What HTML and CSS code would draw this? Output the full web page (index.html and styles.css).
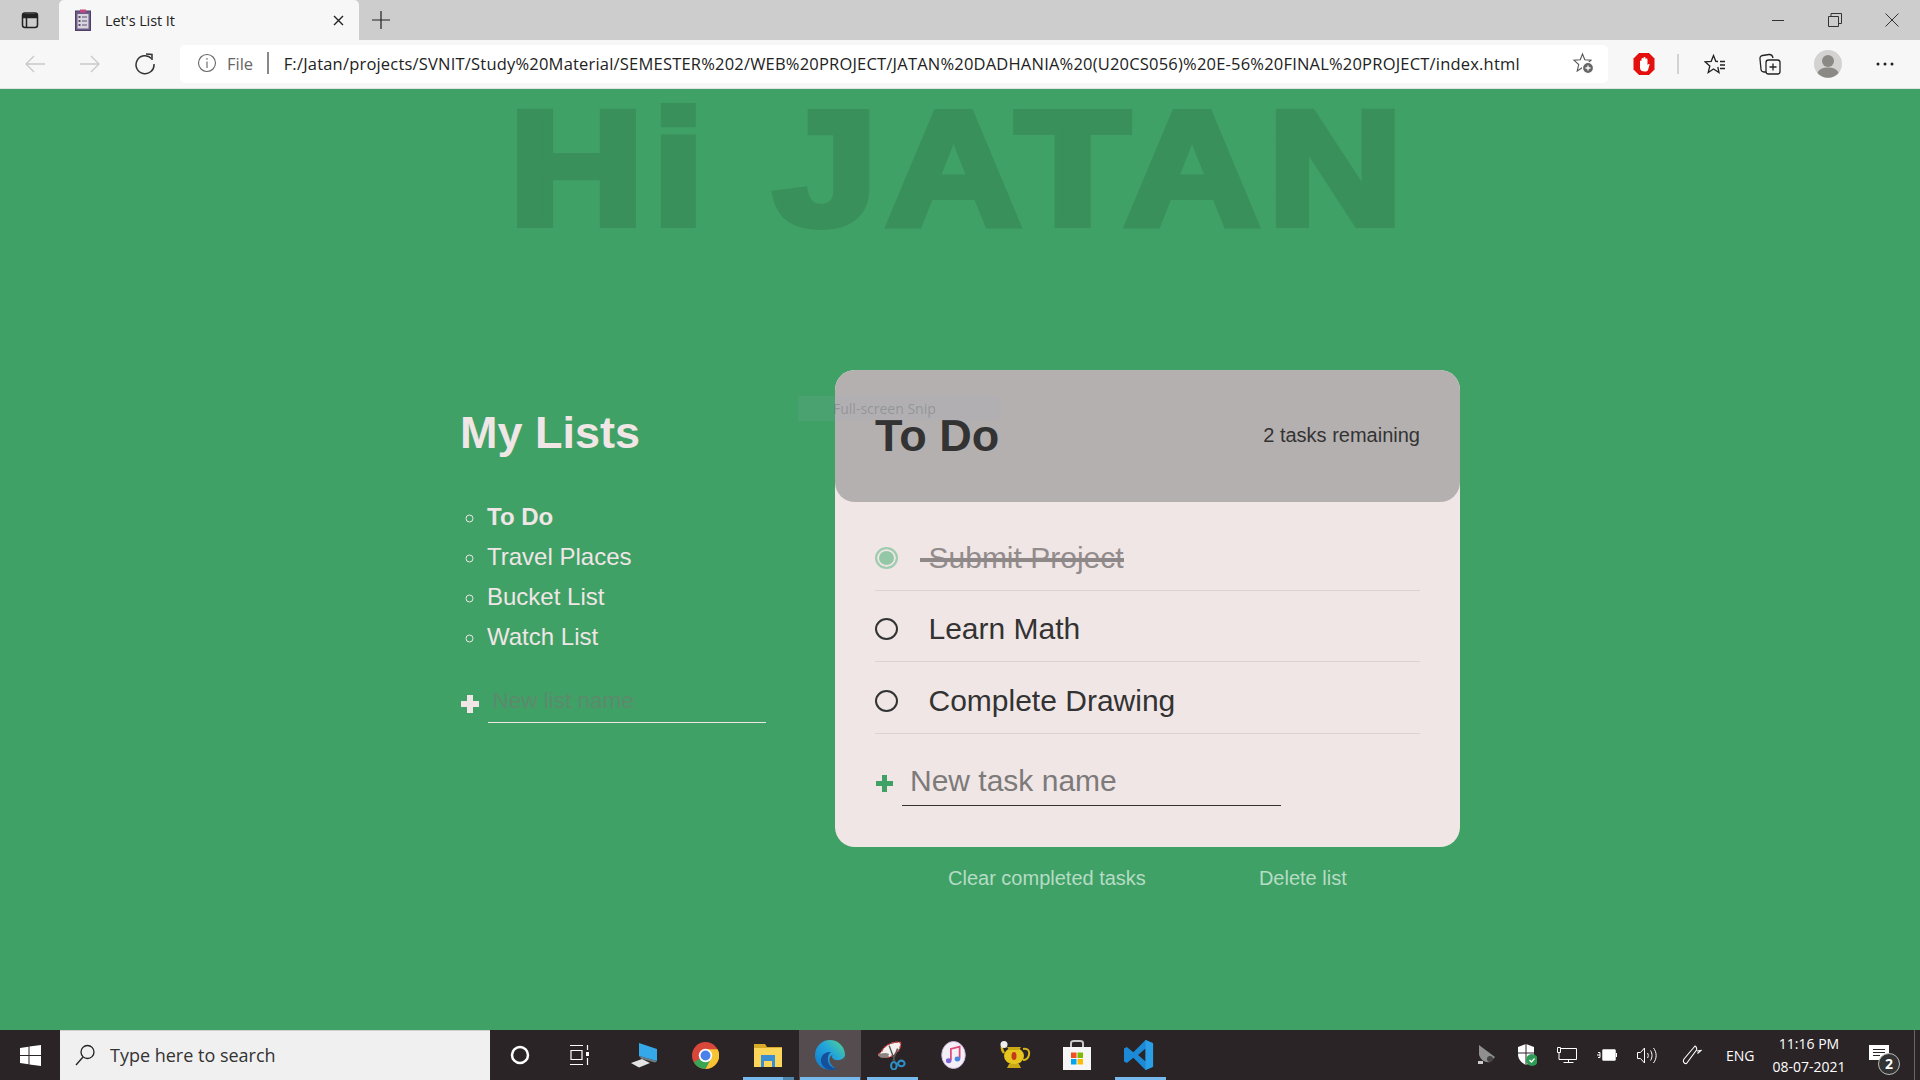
FILE: index.html
```html
<!DOCTYPE html>
<html lang="en">
<head>
<meta charset="utf-8">
<title>Let's List It</title>
<link rel="stylesheet" href="styles.css">
</head>
<body>
<header class="browser">
  <div class="tabbar">
    <div class="side-btn">
      <svg width="18" height="18" viewBox="0 0 18 18" fill="none" stroke="#222" stroke-width="1.5"><rect x="1.5" y="2" width="15" height="14.5" rx="2.5"/><path d="M2 3.5h14v3H2z" fill="#222"/><path d="M5.5 6v10"/></svg>
    </div>
    <div class="tab">
      <svg class="tab-icon" width="16" height="22" viewBox="0 0 16 22"><rect x="0.5" y="2" width="15" height="19.5" fill="#6d5a86" stroke="#4e3f66"/><rect x="5" y="0.5" width="6" height="3" fill="#c2477f"/><rect x="2.5" y="5" width="11" height="14.5" fill="#d9d5de"/><path d="M3.5 7h2v2h-2zM3.5 11h2v2h-2zM3.5 15h2v2h-2z" fill="#5d5070"/><path d="M7 8h5M7 12h5M7 16h5" stroke="#5d5070"/></svg>
      <span class="tab-title">Let's List It</span>
      <svg class="tab-close" width="11" height="11" viewBox="0 0 11 11" stroke="#222" stroke-width="1.4"><path d="M1 1l9 9M10 1l-9 9"/></svg>
    </div>
    <div class="new-tab">
      <svg width="18" height="18" viewBox="0 0 18 18" stroke="#222" stroke-width="1.2"><path d="M9 0v18M0 9h18"/></svg>
    </div>
    <div class="win-btns">
      <div class="win-btn"><svg width="14" height="14" viewBox="0 0 14 14" stroke="#333"><path d="M1 7.5h12"/></svg></div>
      <div class="win-btn"><svg width="14" height="14" viewBox="0 0 14 14" fill="none" stroke="#333"><path d="M.5 3.5h10v10H.5z"/><path d="M3 3.5V.5h10.500v10h-3"/></svg></div>
      <div class="win-btn"><svg width="14" height="14" viewBox="0 0 14 14" stroke="#333"><path d="M.5.5l13 13M13.500.5l-13 13"/></svg></div>
    </div>
  </div>
  <div class="toolbar">
    <div class="nav">
      <svg width="22" height="22" viewBox="0 0 22 22" fill="none" stroke="#c9c9c9" stroke-width="1.3"><path d="M21 11H2M10 3l-8 8 8 8"/></svg>
      <svg width="22" height="22" viewBox="0 0 22 22" fill="none" stroke="#c9c9c9" stroke-width="1.3"><path d="M1 11h19M12 3l8 8-8 8"/></svg>
      <svg width="22" height="22" viewBox="0 0 22 22" fill="none" stroke="#333" stroke-width="1.5"><path d="M17.500 5.500A9 9 0 1 0 20 11"/><path d="M12 1l6 .5V7"/></svg>
    </div>
    <div class="address">
      <svg width="20" height="20" viewBox="0 0 20 20" fill="none" stroke="#666" stroke-width="1.1"><circle cx="10" cy="10" r="8.500"/><path d="M10 8.500V15M10 5v1.800"/></svg>
      <span class="file-label">File</span>
      <span class="addr-sep"></span>
      <span class="url">F:/Jatan/projects/SVNIT/Study%20Material/SEMESTER%202/WEB%20PROJECT/JATAN%20DADHANIA%20(U20CS056)%20E-56%20FINAL%20PROJECT/index.html</span>
      <svg class="addr-star" width="22" height="22" viewBox="0 0 22 22" fill="none" stroke="#555" stroke-width="1.1"><path d="M10.500 2l2.300 5.800 6.200.5-4.700 4.200 1.500 6.500-5.300-3.500-5.300 3.500 1.500-6.500L2 8.300l6.200-.5z"/><circle cx="16" cy="16" r="5.500" fill="#666" stroke="#fff" stroke-width="1.200"/><path d="M16 13.500v5M13.500 16h5" stroke="#fff" stroke-width="1.300"/></svg>
    </div>
    <div class="tools">
      <svg class="t-adblock" width="22" height="24" viewBox="0 0 22 24"><path d="M6 1h10l5.500 5.500v11L16 23H6L.5 17.500v-11z" fill="#e3100f"/><path d="M7 16V9.500c0-1.500 1.500-1.500 1.500 0V7c0-1.500 2-1.500 2 0V6c0-1.500 2-1.500 2 0v1.500c0-1.300 2-1.300 2 0V13c1-1.500 2.500-1 2-.2L15 18c-.6 1-1.500 1.500-3 1.500-3 0-5-1-5-3.500z" fill="#fff"/></svg>
      <span class="tool-sep"></span>
      <svg class="t-fav" width="22" height="22" viewBox="0 0 22 22" fill="none" stroke="#222" stroke-width="1.300"><path d="M14 8.500l-2.200-.2L9.500 2.500 7.200 8.300 1 8.800 5.800 13l-1.600 6.500 5.300-3.500 5.500 3.500-1.200-5.500"/><path d="M16 8.500h5M16 12h5M16 15.500h5"/></svg>
      <svg class="t-coll" width="22" height="22" viewBox="0 0 22 22" fill="none" stroke="#222" stroke-width="1.300"><rect x="7" y="7" width="14" height="14" rx="2.500"/><path d="M14 10.500v7M10.500 14h7"/><path d="M7 19H5a3 3 0 0 1-3-2.500L1 6a3 3 0 0 1 2.500-3.500L10 1.500c2-.2 3.500 1 4 3.500"/></svg>
      <svg class="t-avatar" width="28" height="28" viewBox="0 0 28 28"><circle cx="14" cy="14" r="14" fill="#d4d2d0"/><circle cx="14" cy="11" r="6" fill="#8b8985"/><path d="M3.500 23c1.500-4 5.500-5.500 10.500-5.500s9 1.500 10.500 5.500A14 14 0 0 1 3.500 23z" fill="#8b8985"/></svg>
      <svg class="t-more" width="18" height="4" viewBox="0 0 18 4" fill="#222"><circle cx="2" cy="2" r="1.500"/><circle cx="9" cy="2" r="1.500"/><circle cx="16" cy="2" r="1.500"/></svg>
    </div>
  </div>
</header>

<main class="page">
  <h1 class="hero"><span class="hero-text">Hi JATAN</span></h1>
  <div class="board">
    <section class="lists">
      <h2 class="lists-title">My Lists</h2>
      <ul class="list-names">
        <li class="active">To Do</li>
        <li>Travel Places</li>
        <li>Bucket List</li>
        <li>Watch List</li>
      </ul>
      <form class="new-list">
        <span class="plus plus-light"></span>
        <input class="new-list-input" type="text" placeholder="New list name">
      </form>
    </section>
    <section class="todo">
      <div class="card">
        <div class="card-head">
          <h2 class="card-title">To Do</h2>
          <p class="remaining">2 tasks remaining</p>
        </div>
        <div class="card-body">
          <div class="task done"><span class="radio"></span><span class="task-text">Submit Project</span></div>
          <div class="task"><span class="radio"></span><span class="task-text">Learn Math</span></div>
          <div class="task"><span class="radio"></span><span class="task-text">Complete Drawing</span></div>
          <form class="new-task">
            <span class="plus plus-green"></span>
            <input class="new-task-input" type="text" placeholder="New task name">
          </form>
        </div>
      </div>
      <div class="actions">
        <span class="action">Clear completed tasks</span>
        <span class="action">Delete list</span>
      </div>
    </section>
  </div>
  <div class="snip-toast"><span class="snip-thumb"></span><span class="snip-text">Full-screen Snip</span></div>
</main>

<footer class="taskbar">
  <div class="start">
    <svg width="21" height="21" viewBox="0 0 21 21" fill="#fff"><path d="M0 3l8.500-1.200V10H0zM9.500 1.600L21 0v10H9.500zM0 11h8.500v8.200L0 18zM9.500 11H21v10L9.500 19.400z"/></svg>
  </div>
  <div class="search">
    <svg width="20" height="22" viewBox="0 0 20 22" fill="none" stroke="#222" stroke-width="1.300"><circle cx="12.500" cy="8" r="6.500"/><path d="M8 13L1 21"/></svg>
    <span class="search-text">Type here to search</span>
  </div>
  <div class="tb-item"><svg width="20" height="20" viewBox="0 0 20 20" fill="none" stroke="#fff" stroke-width="2.500"><circle cx="10" cy="10" r="8"/></svg></div>
  <div class="tb-item"><svg width="20" height="20" viewBox="0 0 20 20" fill="none" stroke="#fff" stroke-width="1.200"><path d="M0 .5h13M0 19.500h13M1 5.500h11v9H1z"/><path d="M17.500 0v5M17.500 13v7"/><rect x="16" y="7" width="3" height="4" fill="#fff" stroke="none"/></svg></div>
  <div class="apps">
    <div class="app"><svg width="28" height="26" viewBox="0 0 28 26"><path d="M9 1l18 6v12L9 14z" fill="#35a8ea"/><path d="M9 14l18 5-2 1.500-14-4z" fill="#6f7f88"/><path d="M1 21l11-4 8 4-11 4.500z" fill="#e4e4e4"/></svg></div>
    <div class="app"><svg width="27" height="27" viewBox="0 0 30 30"><circle cx="15" cy="15" r="15" fill="#d9473a"/><path d="M15 15L2 22.500A15 15 0 0 0 15 30l7.500-13z" fill="#3aa655"/><path d="M15 8h13.500a15 15 0 0 1-13.500 22l7-13z" fill="#f6c433"/><circle cx="15" cy="15" r="7.500" fill="#fff"/><circle cx="15" cy="15" r="5.500" fill="#4a80ea"/></svg></div>
    <div class="app"><svg width="28" height="23" viewBox="0 0 28 23"><path d="M0 0h11l2 3h15v20H0z" fill="#d9a928"/><path d="M0 4h28v19H0z" fill="#fbd65a"/><path d="M7 11h14v12h-3v-6h-8v6H7z" fill="#3a8fd4"/></svg></div>
    <div class="app app-active"><svg width="30" height="30" viewBox="0 0 30 30"><defs><linearGradient id="edgeFill" x1="0" y1="1" x2="1" y2="0"><stop offset="0" stop-color="#1278c8"/><stop offset=".55" stop-color="#22a3dc"/><stop offset="1" stop-color="#55d68a"/></linearGradient></defs><circle cx="15" cy="15" r="15" fill="url(#edgeFill)"/><path d="M30 16c-2 4-7 5-11 3.500-2-1-2.500-3-1.500-4.500-3 1-4 5-2 8.500 2 3 5 6 8 5.500 3-1.500 6-7 6.500-12.500z" fill="#544c4e"/><path d="M16 12C9 11 5 17 6 22c1 4 5 8 9 8 3 0 6-.6 8-1.800-4 .8-8-2-9.500-5.500C12 19 13 14 16 12z" fill="#14509c"/></svg></div>
    <div class="app"><svg width="28" height="29" viewBox="0 0 30 31" fill="none"><path d="M4 11C7 4 17 0 24 1.500c1.500 5-3 12-10 15-5 2-11 .5-14-1.500z" fill="#f4f0f0" stroke="#d03a3a" stroke-width="1.500" stroke-dasharray="3 1.500"/><path d="M0 15c3-2 8-3 12-1l-2 4H3z" fill="#8a8580"/><path d="M12 5l6 16M21 8l-5 13" stroke="#555" stroke-width="1.500"/><ellipse cx="17" cy="26.500" rx="3" ry="4" stroke="#2e8fc4" stroke-width="2.200"/><ellipse cx="25" cy="24" rx="3.500" ry="3" stroke="#2e8fc4" stroke-width="2.200"/></svg></div>
    <div class="app"><svg width="27" height="28" viewBox="0 0 28 32"><ellipse cx="14" cy="16" rx="13.500" ry="15.500" fill="#f4eef6" stroke="#c8b4d8"/><path d="M11 22V9l10-2.500V20" fill="none" stroke="#e04a78" stroke-width="2"/><ellipse cx="8.500" cy="22.500" rx="3.200" ry="2.800" fill="#7a62d8"/><ellipse cx="18.500" cy="20.500" rx="3.200" ry="2.800" fill="#4a88e0"/></svg></div>
    <div class="app"><svg width="31" height="28" viewBox="0 0 31 28"><ellipse cx="14" cy="15" rx="10" ry="8.500" fill="#e6c51f"/><path d="M23 8c5-1 7 2 6 6s-3 5-6 5" fill="none" stroke="#d6b41a" stroke-width="2"/><path d="M4 12C1 8 1.500 5 3 4" fill="none" stroke="#d6b41a" stroke-width="2.500"/><circle cx="4" cy="3.500" r="3.500" fill="#eee"/><path d="M7 6h14l-2 3H9z" fill="#c9a916"/><path d="M7 27h14l-2-4H9z" fill="#c9a916"/><ellipse cx="14" cy="15" rx="2.500" ry="4" fill="#c43a1a"/></svg></div>
    <div class="app"><svg width="28" height="30" viewBox="0 0 28 30"><path d="M8 7V3C8 1.500 9 1 11 1h6c2 0 3 .5 3 2v4" fill="none" stroke="#c9c9c9" stroke-width="2"/><path d="M0 7h28v23H0z" fill="#f6f6f6"/><rect x="8" y="12.500" width="5.500" height="5.500" fill="#f25022"/><rect x="14.500" y="12.500" width="5.500" height="5.500" fill="#7fba00"/><rect x="8" y="19" width="5.500" height="5.500" fill="#00a4ef"/><rect x="14.500" y="19" width="5.500" height="5.500" fill="#ffb900"/></svg></div>
    <div class="app"><svg width="30" height="30" viewBox="0 0 32 32"><path d="M23 0l8 3.500v25L23 32l-13-13-7 5.500L0 23V9l3-1.500L10 13zM23 9l-8 7 8 7z" fill="#1c8ad6"/><path d="M23 0l8 3.500v25L23 32z" fill="#2a9fe6"/></svg></div>
    <span class="run-mark run-a"></span>
    <span class="run-mark run-a2"></span>
    <span class="run-mark run-b"></span>
    <span class="run-mark run-c"></span>
    <span class="run-mark run-d"></span>
  </div>
  <div class="tray">
    <svg class="tr" width="20" height="22" viewBox="0 0 20 22"><path d="M2 1l16 12-5 5c-5 1-9-2-11-7z" fill="#8f8f8f"/><circle cx="13" cy="15" r="3" fill="#444"/><path d="M1 17h5v3H1z" fill="#ccc"/></svg>
    <svg class="tr" width="20" height="22" viewBox="0 0 20 22"><path d="M9 0l8 3v7c0 6-4 9-8 11-4-2-8-5-8-11V3z" fill="#fff"/><path d="M9 0v21M1 9h16" stroke="#2b2427"/><circle cx="15" cy="16" r="6" fill="#2e9b55"/><path d="M12.500 16l2 2 3-3.500" stroke="#fff" fill="none" stroke-width="1.200"/></svg>
    <svg class="tr" width="20" height="16" viewBox="0 0 20 16" fill="none" stroke="#fff"><path d="M.5 .5h3v5h-3zM3.500 1.500h16v11h-16M11.500 12.500v3M6.500 15.500h10M2 5.500v7h2"/></svg>
    <svg class="tr" width="20" height="12" viewBox="0 0 20 12" fill="none" stroke="#fff"><path d="M0 6h3M1 3.500h2v5H1M6 1h12v10H6z"/><rect x="6" y="1" width="12" height="10" fill="#fff"/><path d="M19.500 4v4"/></svg>
    <svg class="tr" width="20" height="17" viewBox="0 0 20 17" fill="none" stroke="#fff"><path d="M.5 5.500h3L7.500 1v15l-4-4.500h-3zM10.500 6c1 1.500 1 3.500 0 5M13.500 3.500c2 3 2 7 0 10M16.500 1c3.500 4.500 3.500 10.500 0 15"/></svg>
    <svg class="tr tr-pen" width="20" height="20" viewBox="0 0 20 20" fill="none" stroke="#fff" stroke-width="1.100"><path d="M13 1L2 14c-1.500 2.500 0 5 2.500 4.500l10-13.500c.5-2-.5-3.500-1.500-4zM15 6l4-.5-3.500 3"/></svg>
    <span class="lang">ENG</span>
    <div class="clock"><span>11:16 PM</span><span>08-07-2021</span></div>
    <div class="notify">
      <svg class="notify-icon" width="20" height="16" viewBox="0 0 20 16" fill="#fff"><path d="M0 0h20v15H0z"/><path d="M4 4.500h12M4 7.500h12M4 10.500h7" stroke="#2b2427"/></svg>
      <span class="badge">2</span>
    </div>
  </div>
</footer>
</body>
</html>
```

FILE: styles.css
```css
* { box-sizing: border-box; }
html, body { margin: 0; height: 100%; }
body {
  display: flex;
  flex-direction: column;
  height: 1080px;
  overflow: hidden;
  font-family: "Liberation Sans", Arial, sans-serif;
}

/* Browser chrome */
.browser { flex: none; height: 89px; border-bottom: 1px solid #e2e2e2; background: #f7f7f7; }
.tabbar { display: flex; align-items: stretch; height: 40px; background: #cdcdcd; }
.side-btn { width: 59px; display: flex; align-items: center; justify-content: center; }
.tab {
  width: 300px;
  display: flex;
  align-items: center;
  background: #f7f7f7;
  border-radius: 5px 5px 0 0;
  padding: 0 15px 0 16px;
  font-family: "Open Sans", sans-serif;
  font-size: 14.500px;
  color: #222;
}
.tab-icon { flex: none; }
.tab-title { margin-left: 14px; flex: 1; letter-spacing: -.1px; }
.tab-close { flex: none; }
.new-tab { width: 44px; display: flex; align-items: center; justify-content: center; }
.win-btns { margin-left: auto; display: flex; align-items: center; }
.win-btn { width: 57px; display: flex; justify-content: center; }
.toolbar { display: flex; align-items: center; height: 48px; }
.nav { width: 180px; display: flex; align-items: center; gap: 33px; padding-left: 24px; }
.address {
  width: 1428px;
  height: 38px;
  background: #fff;
  border-radius: 5px;
  display: flex;
  align-items: center;
  padding: 0 14px 2px 17px;
  font-family: "Open Sans", sans-serif;
  font-size: 16.500px;
}
.file-label { margin-left: 10px; color: #666; }
.addr-sep { width: 1.500px; height: 22px; background: #888; margin: 0 15px 0 14px; }
.url { flex: 1; white-space: nowrap; color: #222; letter-spacing: .2px; }
.addr-star { flex: none; }
.tools { flex: 1; display: flex; align-items: center; padding-left: 24.500px; }
.tool-sep { width: 2px; height: 20px; background: #d2d2d2; margin: 0 25.500px 0 22px; }
.t-coll { margin-left: 33px; }
.t-avatar { margin-left: 33px; }
.t-more { margin-left: 34px; }

/* Page */
.page { flex: 1; position: relative; background: #3fa166; min-height: 0; }
.hero {
  margin: 0;
  height: 281px;
  text-align: center;
  font-size: 162px;
  line-height: 158px;
  font-weight: 700;
  color: #39905a;
}
.hero-text {
  display: inline-block;
  letter-spacing: 7.700px;
  -webkit-text-stroke: 8px #39905a;
  white-space: nowrap;
  transform: scaleX(1.15);
}
.board { display: flex; align-items: flex-start; padding-left: 460px; }

.lists { width: 375px; color: #f0e6e6; }
.lists-title { margin: 33px 0 34px; font-size: 45px; line-height: 60px; font-weight: 700; }
.list-names { margin: 0; padding: 0 0 0 27px; list-style: circle; font-size: 24px; line-height: 40px; }
.active { font-weight: 700; }
.new-list { display: flex; align-items: center; margin-top: 26px; }
.plus { position: relative; flex: none; display: block; }
.plus::before, .plus::after { content: ""; position: absolute; background: currentColor; }
.plus-light { width: 18px; height: 18px; margin-left: 1px; margin-right: 8.500px; margin-top: 1px; color: #f0e6e6; }
.plus-light::before { left: 6px; top: 0; width: 6px; height: 18px; }
.plus-light::after { left: 0; top: 6px; width: 18px; height: 6px; }
.new-list-input {
  width: 278px;
  height: 40px;
  padding: 0 0 4px 5px;
  background: transparent;
  border: 0;
  border-bottom: 1px solid #f0e6e6;
  outline: 0;
  font: 22.500px "Liberation Sans", Arial, sans-serif;
  color: #f0e6e6;
}
.new-list-input::placeholder { color: #5d8a6d; opacity: 1; }

.todo { width: 625px; }
.card { height: 477px; background: #f0e6e6; border-radius: 20px; color: #333; }
.card-head {
  height: 132px;
  display: flex;
  align-items: center;
  justify-content: space-between;
  padding: 0 40px;
  background: #b5b0b0;
  border-radius: 20px;
}
.card-title { margin: 0; font-size: 45px; line-height: 40px; font-weight: 700; }
.remaining { margin: 0 0 2px; font-size: 20px; }
.card-body { padding: 17px 40px 0; }
.task {
  display: flex;
  align-items: center;
  height: 71.500px;
  padding-top: 7px;
  border-bottom: 1px solid #dcd3d3;
  font-size: 30px;
}
.radio { flex: none; width: 23px; height: 22px; border: 2.500px solid #333; border-radius: 50%; margin-right: 30.500px; }
.task-text { position: relative; }
.done .task-text { color: #938c8c; }
.done .task-text::after {
  content: "";
  position: absolute;
  left: -9px;
  right: 0;
  top: 52%;
  height: 3.500px;
  background: #8f8888;
}
.done .radio { border-color: #9fcdb0; background: #94c7a6; box-shadow: inset 0 0 0 2px #f0e6e6; }
.new-task { display: flex; align-items: center; margin-top: 22px; }
.plus-green { width: 17px; height: 17px; margin-left: 1px; margin-right: 9px; margin-top: 5px; color: #3fa166; }
.plus-green::before { left: 6px; top: 0; width: 5px; height: 17px; }
.plus-green::after { left: 0; top: 6px; width: 17px; height: 5px; }
.new-task-input {
  width: 379px;
  height: 50px;
  padding: 1px 0 0 8px;
  background: transparent;
  border: 0;
  border-bottom: 1px solid #333;
  outline: 0;
  font: 30px "Liberation Sans", Arial, sans-serif;
  color: #333;
}
.new-task-input::placeholder { color: #7d7a7a; opacity: 1; }
.actions { display: flex; padding: 20px 0 0 113px; font-size: 20px; color: #b6dcc4; }
.action:first-child { margin-right: 113px; }

/* Snip tooltip lying over the page */
.snip-toast {
  position: absolute;
  left: 798px;
  top: 307px;
  width: 202px;
  height: 25px;
  display: flex;
  align-items: center;
  background: rgba(160, 170, 200, .12);
  font-family: "Open Sans", sans-serif;
  font-size: 14px;
  line-height: 14px;
  color: rgba(80, 100, 100, .35);
}
.snip-thumb { width: 35px; }

/* Taskbar */
.taskbar { flex: none; height: 50px; display: flex; align-items: center; background: #2b2427; }
.start { width: 60px; display: flex; justify-content: center; }
.search {
  width: 430px;
  height: 50px;
  display: flex;
  align-items: center;
  padding: 0 0 2px 15px;
  background: #f0f0f0;
  border-top: 1px solid #cfcfcf;
  font-family: "Open Sans", sans-serif;
  font-size: 18px;
  color: #333;
}
.search-text { margin-left: 15px; }
.tb-item { width: 60px; display: flex; justify-content: center; }
.apps { position: relative; height: 50px; display: flex; margin-left: 3px; }
.app { width: 61.900px; height: 50px; display: flex; align-items: center; justify-content: center; }
.app-active { background: #544c4e; }
.run-mark { position: absolute; bottom: 0; height: 3px; background: #76b9ed; }
.run-a { left: 130px; width: 40px; }
.run-a2 { left: 170px; width: 11px; background: #4f86ae; }
.run-b { left: 187px; width: 60px; }
.run-c { left: 254px; width: 51px; }
.run-d { left: 502px; width: 51px; }
.tray { margin-left: auto; display: flex; align-items: center; height: 50px; color: #fff; padding-right: 5px; }
.tr { margin-right: 20px; }
.tr-pen { margin-left: 5px; margin-right: 24px; }
.lang { font-family: "Open Sans", sans-serif; font-size: 14px; margin-right: 12px; }
.clock { width: 85px; display: flex; flex-direction: column; align-items: center; font-family: "Open Sans", sans-serif; font-size: 14px; line-height: 23px; }
.notify { position: relative; width: 46px; margin-left: 17.500px; height: 50px; display: flex; align-items: center; border-right: 1px solid #6a6466; }
.notify-icon { margin-bottom: 4px; }
.badge {
  position: absolute;
  left: 9px;
  top: 23px;
  width: 22px;
  height: 22px;
  border: 1px solid #bbb;
  border-radius: 50%;
  background: #333;
  font-family: "Open Sans", sans-serif;
  font-size: 14px;
  font-weight: 700;
  line-height: 20px;
  text-align: center;
}
```
